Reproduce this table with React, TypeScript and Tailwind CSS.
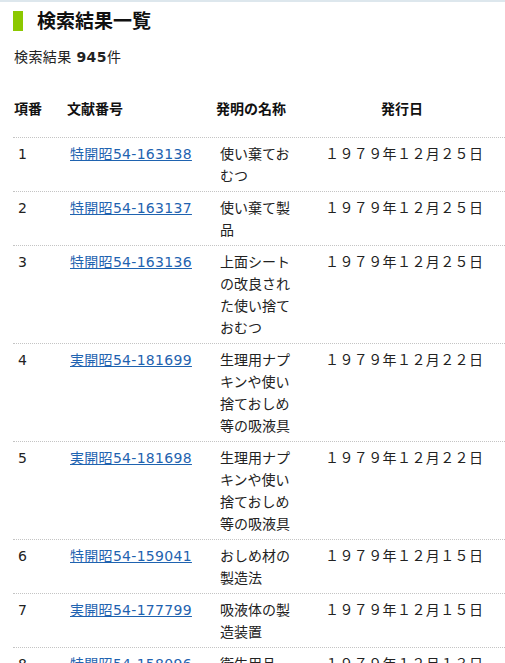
import React from "react";

const rows = [
  ["1", "特開昭54-163138", "使い棄ておむつ", "１９７９年１２月２５日"],
  ["2", "特開昭54-163137", "使い棄て製品", "１９７９年１２月２５日"],
  ["3", "特開昭54-163136", "上面シートの改良された使い捨ておむつ", "１９７９年１２月２５日"],
  ["4", "実開昭54-181699", "生理用ナプキンや使い捨ておしめ等の吸液具", "１９７９年１２月２２日"],
  ["5", "実開昭54-181698", "生理用ナプキンや使い捨ておしめ等の吸液具", "１９７９年１２月２２日"],
  ["6", "特開昭54-159041", "おしめ材の製造法", "１９７９年１２月１５日"],
  ["7", "実開昭54-177799", "吸液体の製造装置", "１９７９年１２月１５日"],
  ["8", "特開昭54-158096", "衛生用品", "１９７９年１２月１３日"],
];

export default function App() {
  return (
    <div
      className="w-[505px] bg-white text-[#222] text-[14px] leading-[22px]"
      style={{ fontFamily: '"DejaVu Sans", "Noto Sans CJK JP", sans-serif' }}
    >
      <div className="h-[2px] bg-[#dde7ed]" />
      <div className="h-[38px] flex items-center pl-[13px]">
        <div className="w-[10px] h-[20px] bg-[#8cc800]" />
        <h1 className="ml-[14px] text-[19px] font-bold text-[#111]">検索結果一覧</h1>
      </div>
      <div className="mt-[6px] pl-[14px] tracking-[0.4px]">
        検索結果 <span className="font-bold">945</span>件
      </div>
      <div className="ml-[13px] w-[492px] mt-[30px]">
        <div className="grid grid-cols-[49px_154px_80px_209px] font-bold pb-[17px] text-[#111]">
          <div className="pl-[1px]">項番</div>
          <div className="pl-[5px]">文献番号</div>
          <div className="whitespace-nowrap">発明の名称</div>
          <div className="pl-[85px]">発行日</div>
        </div>
        {rows.map((r) => (
          <div
            key={r[0]}
            className="grid grid-cols-[49px_154px_80px_209px] border-t border-dotted border-[#c4c4c4] pt-[5px] pb-[4px]"
          >
            <div className="pl-[5px]">{r[0]}</div>
            <div className="pl-[8px]">
              <a href="#" className="text-[#1f63b0] underline whitespace-nowrap tracking-[0.3px]">
                {r[1]}
              </a>
            </div>
            <div className="pl-[4px]">{r[2]}</div>
            <div className="pl-[29px] whitespace-nowrap tracking-[0.4px]">{r[3]}</div>
          </div>
        ))}
      </div>
    </div>
  );
}
